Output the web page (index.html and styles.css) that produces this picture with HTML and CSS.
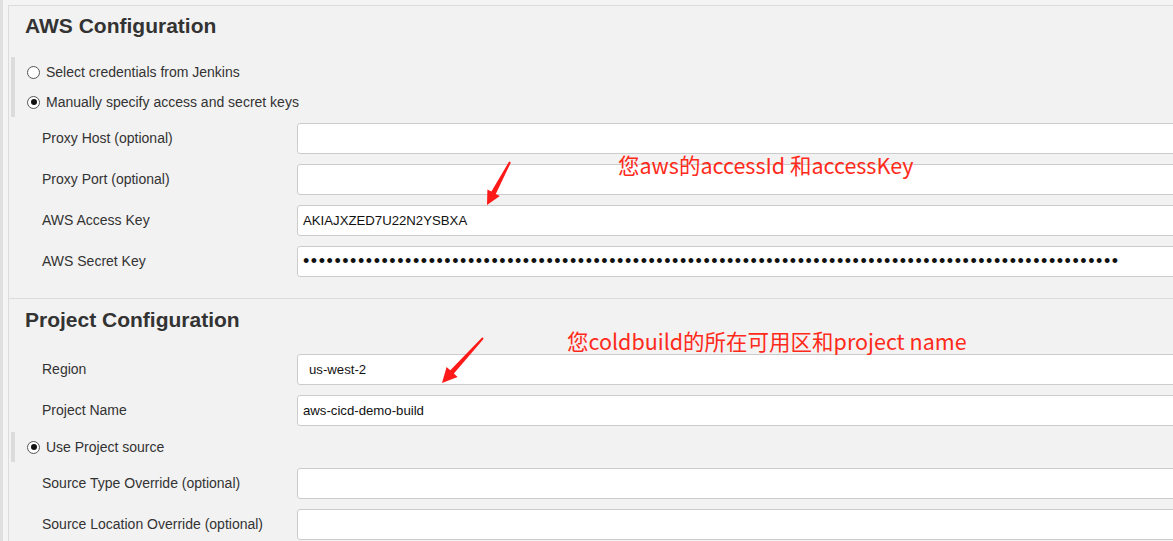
FILE: index.html
```html
<!DOCTYPE html>
<html lang="zh-CN">
<head>
<meta charset="utf-8">
<title>AWS Configuration</title>
<link rel="stylesheet" href="styles.css">
</head>
<body>
<div class="frame">
  <div class="panel">
    <section class="section">
      <h2 class="heading">AWS Configuration</h2>
      <div class="radio-group">
        <label class="radio-row"><input type="radio" name="cred" class="radio"><span>Select credentials from Jenkins</span></label>
        <label class="radio-row"><input type="radio" name="cred" class="radio" checked><span>Manually specify access and secret keys</span></label>
      </div>
      <div class="fields">
        <div class="field"><span class="label">Proxy Host (optional)</span><input class="input" type="text" value=""></div>
        <div class="field"><span class="label">Proxy Port (optional)</span><input class="input" type="text" value=""></div>
        <div class="field"><span class="label">AWS Access Key</span><input class="input" type="text" value="AKIAJXZED7U22N2YSBXA"></div>
        <div class="field"><span class="label">AWS Secret Key</span><input class="input password" type="password" value="xxxxxxxxxxxxxxxxxxxxxxxxxxxxxxxxxxxxxxxxxxxxxxxxxxxxxxxxxxxxxxxxxxxxxxxxxxxxxxxxxxxxxxxxxxxxxxxxxxxxxxxx"></div>
      </div>
    </section>
    <section class="section section-second">
      <h2 class="heading">Project Configuration</h2>
      <div class="fields fields-top">
        <div class="field"><span class="label">Region</span><input class="input input-region" type="text" value="us-west-2"></div>
        <div class="field"><span class="label">Project Name</span><input class="input" type="text" value="aws-cicd-demo-build"></div>
      </div>
      <div class="radio-group radio-group-single">
        <label class="radio-row"><input type="radio" name="src" class="radio" checked><span>Use Project source</span></label>
      </div>
      <div class="fields">
        <div class="field"><span class="label">Source Type Override (optional)</span><input class="input" type="text" value=""></div>
        <div class="field"><span class="label">Source Location Override (optional)</span><input class="input" type="text" value=""></div>
      </div>
    </section>
  </div>
</div>

<div class="note note-one">您aws的accessId 和accessKey</div>
<div class="note note-two">您coldbuild的所在可用区和project name</div>

<svg class="arrow arrow-one" width="36" height="50" viewBox="0 0 36 50">
  <polygon points="29.1,3.5 11.4,33.5 7.4,31.4 7,47 19.8,38 15.8,35.9 30.9,4.5" fill="#ff1a1a"/>
</svg>
<svg class="arrow arrow-two" width="52" height="54" viewBox="0 0 52 54">
  <polygon points="46.3,3.3 14.3,36.2 10.6,32.9 6,49 21.6,42.9 17.9,39.6 47.7,4.7" fill="#ff1a1a"/>
</svg>
</body>
</html>
```

FILE: styles.css
```css
html, body {
  margin: 0;
  padding: 0;
}

body {
  background: #f2f2f2;
  font-family: "Liberation Sans", Arial, sans-serif;
  font-size: 14px;
  color: #333;
  overflow: hidden;
  width: 1173px;
  height: 541px;
  position: relative;
}

.frame {
  border-left: 3px solid #e0e0e0;
  padding-left: 5px;
  padding-top: 5px;
  background: #f4f4f4;
  height: 536px;
}

.panel {
  border-left: 1px solid #dcdcdc;
  border-top: 1px solid #dcdcdc;
  background: #f2f2f2;
  height: 100%;
}

.section {
  padding-top: 8px;
  padding-bottom: 21px;
}

.section-second {
  border-top: 1px solid #dcdcdc;
  padding-top: 9px;
  padding-bottom: 0;
}

.heading {
  margin: 0 0 19px 16px;
  font-size: 21px;
  line-height: 24px;
  font-weight: bold;
  color: #333;
}

.section-second .heading {
  margin-bottom: 22px;
}

.radio-group {
  margin-left: 2px;
  border-left: 4px solid #dcdcdc;
  padding-left: 12px;
  display: flex;
  flex-direction: column;
}

.radio-group-single {
  margin-top: 6px;
}

.radio-row {
  display: flex;
  align-items: center;
  height: 30px;
  gap: 6px;
  color: #333;
  font-size: 14px;
}

.radio {
  appearance: none;
  -webkit-appearance: none;
  margin: 0;
  width: 13px;
  height: 13px;
  border: 1px solid #555;
  border-radius: 50%;
  background: #fff;
  box-sizing: border-box;
  position: relative;
}

.radio:checked::after {
  content: "";
  position: absolute;
  left: 2.5px;
  top: 2.5px;
  width: 6px;
  height: 6px;
  border-radius: 50%;
  background: #111;
}

.fields {
  margin-top: 6px;
  display: flex;
  flex-direction: column;
  gap: 10px;
}

.fields-top {
  margin-top: 0;
}

.field {
  display: grid;
  grid-template-columns: 255px 1000px;
  align-items: center;
  padding-left: 33px;
}

.label {
  color: #333;
  font-size: 14px;
  line-height: 16px;
  margin-top: -1px;
}

.input {
  box-sizing: border-box;
  height: 31px;
  width: 1000px;
  margin: 0;
  border: 1px solid #cccccc;
  border-radius: 3px;
  background: #fff;
  padding: 0 5px;
  font-family: "Liberation Sans", Arial, sans-serif;
  font-size: 13.2px;
  color: #111;
  outline: none;
}

.input-region {
  padding-left: 11px;
}

.password {
  font-size: 18px;
  letter-spacing: 1.55px;
}

.note {
  position: absolute;
  font-family: "Noto Sans CJK SC", "Noto Sans", sans-serif;
  font-size: 21.5px;
  line-height: 24px;
  color: #ff2a1a;
  white-space: nowrap;
}

.note-one {
  left: 618px;
  top: 153px;
}

.note-two {
  left: 567px;
  top: 329px;
}

.arrow {
  position: absolute;
}

.arrow-one {
  left: 480px;
  top: 158px;
}

.arrow-two {
  left: 436px;
  top: 334px;
}
```
